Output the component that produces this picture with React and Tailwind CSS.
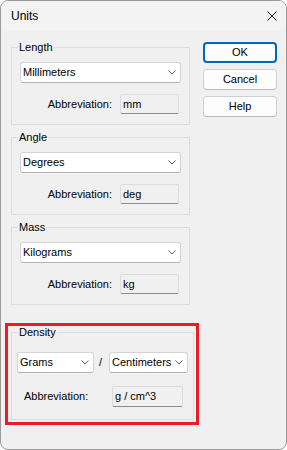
import React from 'react';

const Chevron = () => (
    <svg width="8" height="5" viewBox="0 0 8 5" className="shrink-0">
        <path d="M0.5 0.5 L4 4 L7.5 0.5" fill="none" stroke="#5f5f5f" strokeWidth="1" />
    </svg>
);

const Combo = ({ value, className = '' }) => (
    <div className={`flex h-[21px] items-center justify-between overflow-hidden rounded-[3px] border border-[#d4d4d4] border-b-[#b4b4b4] bg-white pl-[2px] pr-[4px] ${className}`}>
        <span className="overflow-hidden whitespace-nowrap">{value}</span>
        <Chevron />
    </div>
);

const Field = ({ value, className = '' }) => (
    <div className={`flex items-center rounded-[2px] border border-[#dcdcdc] border-b-[#8c8c8c] bg-[#f0f0f0] pl-[2px] ${className}`}>
        {value}
    </div>
);

const UnitGroup = ({ title, unit, abbr, legendShift }) => (
    <fieldset className="border border-[#dcdcdc] px-[8px] pb-[10px]">
        <legend className={`px-[1px] text-[11px] leading-[13px] ${legendShift}`}>{title}</legend>
        <Combo value={unit} className="mt-[8px]" />
        <div className="mt-[11px] flex items-center justify-end gap-[8px] pr-[2px]">
            <span>Abbreviation:</span>
            <Field value={abbr} className="h-[20px] w-[59px]" />
        </div>
    </fieldset>
);

const Button = ({ children, primary }) => (
    <button
        className={
            primary
                ? 'h-[21px] w-[74px] rounded-[4px] border-2 border-[#0067c0] bg-[#fdfdfd] text-[11px]'
                : 'h-[21px] w-[74px] rounded-[4px] border border-[#d0d0d0] border-b-[#b8b8b8] bg-[#fdfdfd] text-[11px]'
        }
    >
        {children}
    </button>
);

export default function App() {
    return (
        <div className="flex h-[450px] w-[287px] flex-col overflow-hidden rounded-[8px] border border-[#9a9a9a] bg-[#f0f0f0] font-['Liberation_Sans',Arial,sans-serif] text-[11px] leading-[13px] text-black">
            {/* title bar */}
            <div className="flex h-[30px] shrink-0 items-center justify-between bg-[#f3f3f3] pl-[10px] pr-[9px]">
                <span className="text-[12px]">Units</span>
                <svg width="10" height="10" viewBox="0 0 10 10">
                    <path d="M0.5 0.5 L9.5 9.5 M9.5 0.5 L0.5 9.5" stroke="#1a1a1a" strokeWidth="1" />
                </svg>
            </div>

            <div className="flex flex-1 pl-[10px] pt-[10px]">
                <div className="flex w-[179px] flex-col gap-[6px]">
                    <UnitGroup title="Length" unit="Millimeters" abbr="mm" legendShift="-ml-[2px]" />
                    <UnitGroup title="Angle" unit="Degrees" abbr="deg" legendShift="-ml-[2px]" />
                    <UnitGroup title="Mass" unit="Kilograms" abbr="kg" legendShift="-ml-[2px]" />

                    {/* highlighted density group */}
                    <div className="-ml-[6px] mt-[12px] w-[194px] border-[3px] border-[#ed1c24] pb-[2px] pl-[3px]">
                        <fieldset className="w-[183px] border border-[#dcdcdc] px-[5px] pb-[12px]">
                            <legend className="ml-[1px] px-[1px] text-[11px] leading-[13px]">Density</legend>
                            <div className="mt-[13px] flex items-center">
                                <Combo value="Grams" className="w-[77px]" />
                                <span className="ml-[5px]">/</span>
                                <Combo value="Centimeters" className="ml-auto w-[79px]" />
                            </div>
                            <div className="mt-[13px] flex items-center">
                                <span className="ml-[7px]">Abbreviation:</span>
                                <Field value="g / cm^3" className="ml-auto mr-[5px] h-[21px] w-[71px]" />
                            </div>
                        </fieldset>
                    </div>
                </div>

                <div className="ml-[13px] mt-[1px] flex flex-col gap-[6px]">
                    <Button primary>OK</Button>
                    <Button>Cancel</Button>
                    <Button>Help</Button>
                </div>
            </div>
        </div>
    );
}
